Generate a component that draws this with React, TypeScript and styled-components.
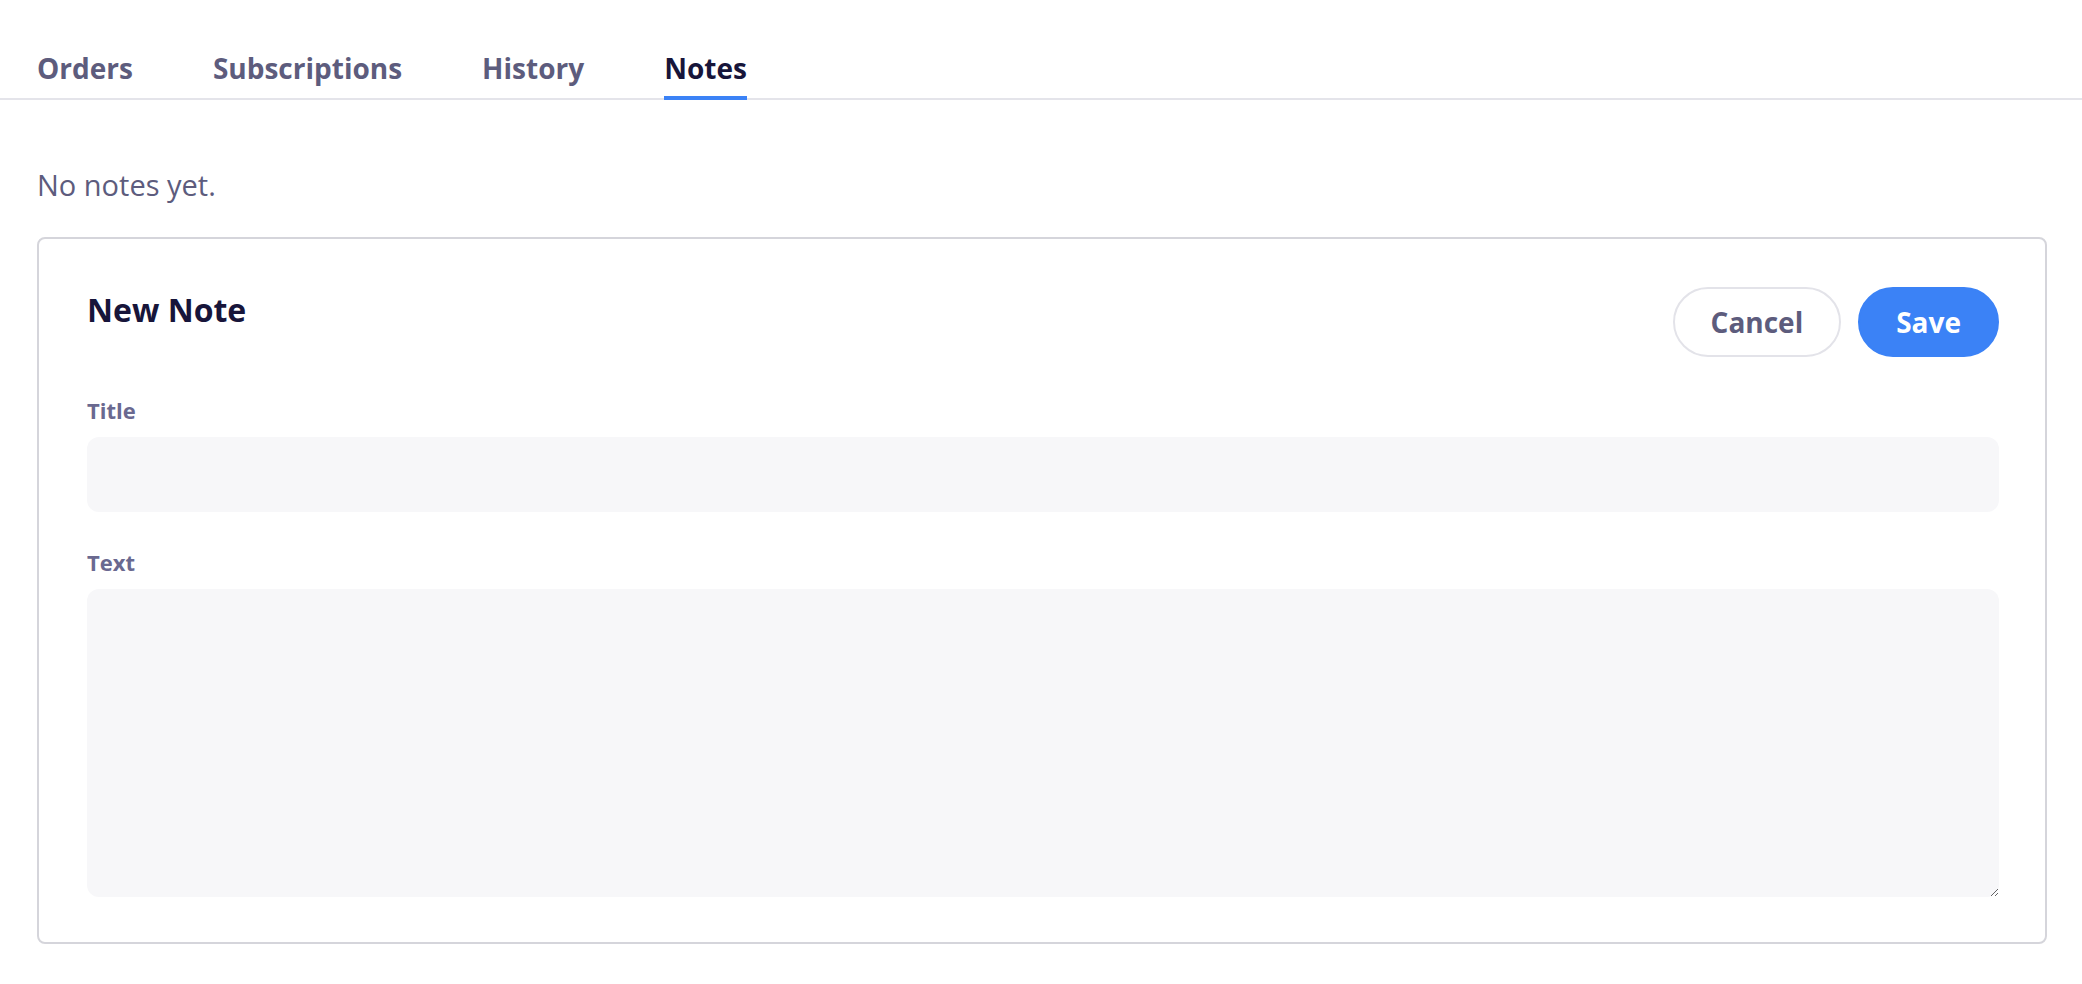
import React, { useState } from "react";
import styled, { createGlobalStyle } from "styled-components";

const Global = createGlobalStyle`
  * { box-sizing: border-box; }
  html, body { margin: 0; padding: 0; background: #ffffff; }
  body { font-family: "Open Sans", "Noto Sans", Arial, sans-serif; color: #17153a; }
`;

const Page = styled.div`
  padding: 0 35px 40px 37px;
`;

const TabBar = styled.nav`
  display: flex;
  gap: 80px;
  padding-top: 47px;
  margin: 0 -35px 0 -37px;
  padding-left: 37px;
  border-bottom: 2px solid #e4e4ea;
`;

const Tab = styled.button<{ $active?: boolean }>`
  appearance: none;
  background: none;
  border: 0;
  border-bottom: 4px solid ${(p) => (p.$active ? "#3b82f6" : "transparent")};
  margin: 0 0 -2px 0;
  padding: 0 0 7px 0;
  font-family: inherit;
  font-size: 28px;
  line-height: 42px;
  font-weight: 700;
  color: ${(p) => (p.$active ? "#17153a" : "#5d5c7d")};
  cursor: pointer;
`;

const Empty = styled.p`
  margin: 64px 0 0 0;
  font-size: 29px;
  line-height: 42px;
  font-weight: 400;
  color: #5d5c7d;
`;

const Card = styled.section`
  margin-top: 31px;
  border: 2px solid #d5d5db;
  border-radius: 8px;
  padding: 48px 46px 45px 48px;
`;

const Header = styled.div`
  display: flex;
  justify-content: space-between;
  align-items: flex-start;
  margin-bottom: 37px;
`;

const Heading = styled.h2`
  margin: 0;
  font-size: 32px;
  line-height: 45px;
  font-weight: 700;
  color: #17153a;
`;

const Actions = styled.div`
  display: flex;
  gap: 17px;
`;

const Button = styled.button<{ $primary?: boolean }>`
  appearance: none;
  height: 70px;
  padding: 0 36px;
  border-radius: 999px;
  border: 2px solid ${(p) => (p.$primary ? "#3b82f6" : "#e3e3e9")};
  background: ${(p) => (p.$primary ? "#3b82f6" : "#ffffff")};
  color: ${(p) => (p.$primary ? "#ffffff" : "#5d5c7d")};
  font-family: inherit;
  font-size: 28px;
  font-weight: 700;
  line-height: 1;
  cursor: pointer;
`;

const Fields = styled.div`
  display: flex;
  flex-direction: column;
  gap: 34px;
`;

const Field = styled.label`
  display: flex;
  flex-direction: column;
  gap: 10px;
`;

const FieldLabel = styled.span`
  font-size: 22px;
  line-height: 33px;
  font-weight: 700;
  color: #6a6990;
`;

const Input = styled.input`
  height: 75px;
  border: 0;
  border-radius: 12px;
  background: #f7f7f9;
  padding: 0 20px;
  font-family: inherit;
  font-size: 24px;
  color: #17153a;
  outline: none;
`;

const TextArea = styled.textarea`
  height: 308px;
  border: 0;
  border-radius: 12px;
  background: #f7f7f9;
  padding: 16px 20px;
  font-family: inherit;
  font-size: 24px;
  color: #17153a;
  outline: none;
  resize: vertical;
`;

const tabs = ["Orders", "Subscriptions", "History", "Notes"];

export default function App() {
  const [active, setActive] = useState("Notes");
  return (
    <Page>
      <Global />
      <TabBar>
        {tabs.map((t) => (
          <Tab key={t} $active={t === active} onClick={() => setActive(t)}>
            {t}
          </Tab>
        ))}
      </TabBar>
      <Empty>No notes yet.</Empty>
      <Card>
        <Header>
          <Heading>New Note</Heading>
          <Actions>
            <Button>Cancel</Button>
            <Button $primary>Save</Button>
          </Actions>
        </Header>
        <Fields>
          <Field>
            <FieldLabel>Title</FieldLabel>
            <Input />
          </Field>
          <Field>
            <FieldLabel>Text</FieldLabel>
            <TextArea />
          </Field>
        </Fields>
      </Card>
    </Page>
  );
}
